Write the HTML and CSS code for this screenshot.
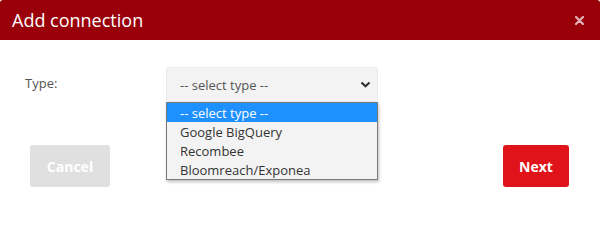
FILE: index.html
```html
<!DOCTYPE html>
<html lang="en">
<head>
    <meta charset="UTF-8">
    <title>Add connection</title>
    <link rel="stylesheet" href="styles.css">
</head>
<body>
    <div class="dialog">
        <header class="dialog-header">
            <h1>Add connection</h1>
            <svg class="close" width="9" height="9" viewBox="0 0 9 9"><path d="M1 1 L8 8 M8 1 L1 8" stroke="#fff" stroke-width="2.2" stroke-linecap="round"/></svg>
        </header>
        <div class="dialog-body">
            <div class="form-row">
                <label class="form-label">Type:</label>
                <div class="select-wrap">
                    <div class="select">
                        <span>-- select type --</span>
                        <svg class="chevron" width="11" height="7" viewBox="0 0 11 7"><path d="M1.5 1.5 L5.5 5.2 L9.5 1.5" fill="none" stroke="#333" stroke-width="2.2"/></svg>
                    </div>
                    <ul class="options">
                        <li class="active">-- select type --</li>
                        <li>Google BigQuery</li>
                        <li>Recombee</li>
                        <li>Bloomreach/Exponea</li>
                    </ul>
                </div>
            </div>
            <div class="actions">
                <button class="btn btn-cancel">Cancel</button>
                <button class="btn btn-next">Next</button>
            </div>
        </div>
    </div>
</body>
</html>
```

FILE: styles.css
```css
body {
    margin: 0;
    font-family: "Open Sans", sans-serif;
    background: #fff;
}
.dialog {
    width: 600px;
    height: 241px;
    background: #fff;
}
.dialog-header {
    height: 40px;
    background: #99000a;
    border-radius: 3px 3px 0 0;
    display: flex;
    align-items: center;
    justify-content: space-between;
    padding: 0 16px 0 12px;
    box-sizing: border-box;
}
.dialog-header h1 {
    margin: 0;
    font-size: 18px;
    font-weight: 400;
    color: #fff;
}
.close {
    opacity: 0.7;
}
.dialog-body {
    padding-top: 27px;
}
.form-row {
    display: flex;
    align-items: center;
    padding-left: 25px;
}
.form-label {
    width: 141px;
    font-size: 13px;
    color: #555;
    margin-top: -3px;
}
.select-wrap {
    position: relative;
}
.select {
    width: 212px;
    height: 35px;
    box-sizing: border-box;
    background: #f3f3f3;
    border: 1px solid #ebebeb;
    border-radius: 3px;
    display: flex;
    align-items: center;
    justify-content: space-between;
    padding: 0 6px 0 13px;
    font-size: 13px;
    color: #555;
}
.options {
    position: absolute;
    top: 35px;
    left: 0;
    width: 212px;
    box-sizing: border-box;
    margin: 0;
    padding: 0;
    list-style: none;
    background: #f3f3f3;
    border: 1px solid #7a7a7a;
    box-shadow: 1px 2px 3px rgba(0, 0, 0, 0.25);
    z-index: 2;
}
.options li {
    height: 19px;
    line-height: 20px;
    padding-left: 13px;
    font-size: 13px;
    color: #333;
}
.options li.active {
    background: #1e90ff;
    color: #fff;
}
.actions {
    display: flex;
    justify-content: space-between;
    padding: 0 31px 0 30px;
    margin-top: 43px;
}
.btn {
    height: 42px;
    border: none;
    border-radius: 3px;
    font-family: "Open Sans", sans-serif;
    font-size: 14px;
    font-weight: bold;
    color: #fff;
}
.btn-cancel {
    width: 80px;
    background: #e0e0e0;
}
.btn-next {
    width: 66px;
    background: #e0121a;
}
```
